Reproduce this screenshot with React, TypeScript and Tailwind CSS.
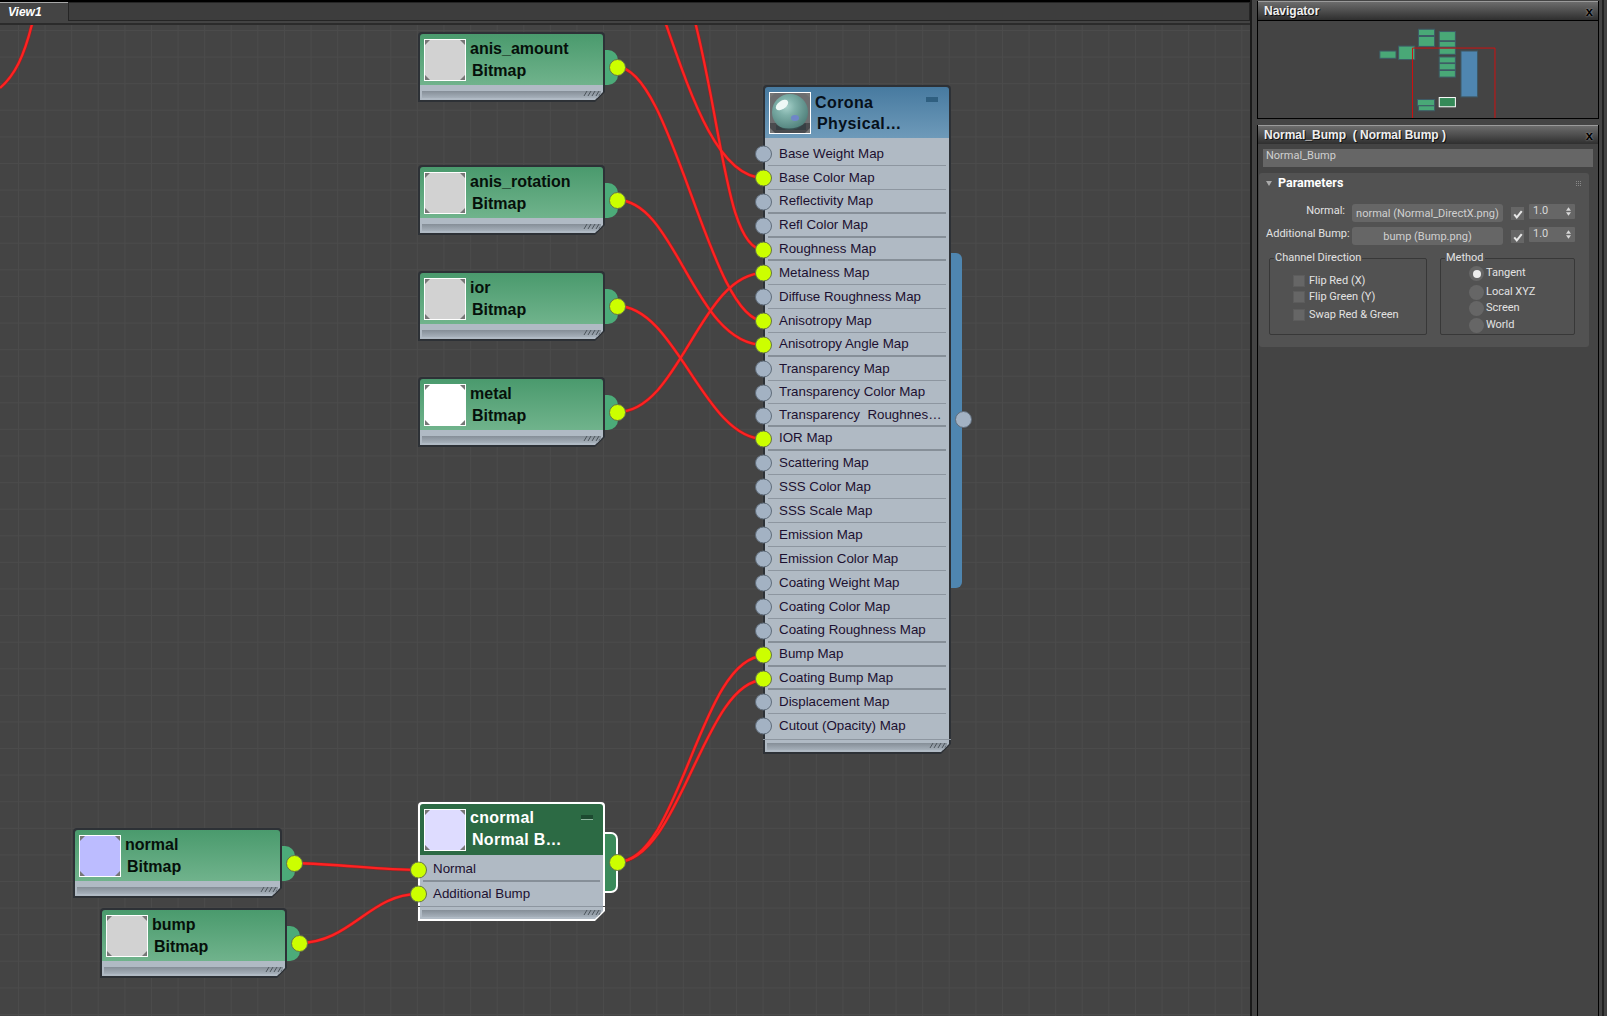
import type { ReactNode } from 'react';

const GREEN_HEAD = 'bg-[linear-gradient(#4a9a6d,#70b38c)]';

const coronaRows = [
  { label: 'Base Weight Map' },
  { label: 'Base Color Map', on: true },
  { label: 'Reflectivity Map', thick: true },
  { label: 'Refl Color Map', thick: true },
  { label: 'Roughness Map', on: true, thick: true, short: true },
  { label: 'Metalness Map', on: true },
  { label: 'Diffuse Roughness Map' },
  { label: 'Anisotropy Map', on: true },
  { label: 'Anisotropy Angle Map', on: true, thick: true },
  { label: 'Transparency Map' },
  { label: 'Transparency Color Map', short: true },
  { label: 'Transparency  Roughnes…', short: true, thick: true },
  { label: 'IOR Map', on: true, thick: true },
  { label: 'Scattering Map' },
  { label: 'SSS Color Map' },
  { label: 'SSS Scale Map' },
  { label: 'Emission Map' },
  { label: 'Emission Color Map' },
  { label: 'Coating Weight Map' },
  { label: 'Coating Color Map' },
  { label: 'Coating Roughness Map', thick: true },
  { label: 'Bump Map', on: true, thick: true },
  { label: 'Coating Bump Map', on: true, thick: true, short: true },
  { label: 'Displacement Map' },
  { label: 'Cutout (Opacity) Map', last: true },
];

const wires = [
  'M33 20C24 58 14 76 0 88',
  'M661 10C689 90 716 178 764 178',
  'M692 10C722 120 726 250 764 250',
  'M617 67C672 67 710 321 764 321',
  'M617 200C676 200 694 345 764 345',
  'M617 306C676 306 704 439 764 439',
  'M617 412C680 412 700 273 764 273',
  'M617 862C680 862 700 656 764 656',
  'M617 862C680 862 704 680 764 680',
  'M294 863C340 864 380 870 418 870',
  'M299 943C350 943 370 894 418 894',
];

function Socket({ on, className }: { on?: boolean; className: string }) {
  return (
    <span
      className={`absolute w-[17px] h-[17px] rounded-full border ${
        on ? 'bg-[#ccff00] border-[#66724a]' : 'bg-[#a3b2c3] border-[#5f6c7a]'
      } ${className}`}
    />
  );
}

function Thumb({ fill, children }: { fill?: string; children?: ReactNode }) {
  return (
    <div className={`relative w-[42px] h-[42px] shrink-0 border border-white overflow-hidden ${fill}`}>
      {children}
      <svg viewBox="0 0 40 40" className="absolute inset-0 w-full h-full">
        <polygon points="0,0 5,0 0,5" fill="#777" />
        <polygon points="40,0 35,0 40,5" fill="#777" />
        <polygon points="0,40 5,40 0,35" fill="#777" />
        <polygon points="40,40 35,40 40,35" fill="#777" />
      </svg>
    </div>
  );
}

function Sphere() {
  return (
    <svg viewBox="0 0 40 40" className="absolute inset-0 w-full h-full">
      <defs>
        <radialGradient id="ball" cx="0.4" cy="0.35" r="0.7">
          <stop offset="0" stopColor="#a9d2cc" />
          <stop offset="0.35" stopColor="#7fb0a9" />
          <stop offset="1" stopColor="#4d7d78" />
        </radialGradient>
      </defs>
      <rect width="40" height="40" fill="#6d6e70" />
      <rect y="30" width="40" height="10" fill="#4a4b4e" />
      <circle cx="20" cy="19" r="18" fill="url(#ball)" />
      <ellipse cx="12" cy="12" rx="7" ry="4" transform="rotate(-35 12 12)" fill="#eef8f6" />
      <ellipse cx="25" cy="25" rx="4" ry="3" fill="#6f86c8" />
      <path d="M6 32Q20 40 36 30L36 37 6 37Z" fill="#2f3c40" opacity="0.7" />
    </svg>
  );
}

function Hatch() {
  return (
    <svg viewBox="0 0 18 5" className="absolute right-[1px] bottom-[2px] w-[18px] h-[5px]">
      {[2, 6, 10, 14, 17].map((x) => (
        <line key={x} x1={x} y1="5" x2={x + 3} y2="0" stroke="#4d555c" strokeWidth="1" />
      ))}
    </svg>
  );
}

function NodeFooter({ selected, tall }: { selected?: boolean; tall?: boolean }) {
  return (
    <div
      className={`${selected ? 'bg-white' : 'bg-[#2d3136]'} px-[2px] pb-[2px] [clip-path:polygon(0_0,100%_0,100%_calc(100%-10px),calc(100%-10px)_100%,0_100%)]`}
    >
      <div
        className={`relative ${tall ? 'h-[15px] pt-[6px]' : 'h-[12px] pt-[3px]'} bg-[#b0bac4] px-[2px] [clip-path:polygon(0_0,100%_0,100%_calc(100%-8px),calc(100%-8px)_100%,0_100%)]`}
      >
        <div className="relative h-[7px] bg-[linear-gradient(#858e97,#a6b0ba)]">
          <Hatch />
        </div>
      </div>
    </div>
  );
}

function BitmapNode({
  name,
  fill,
  className,
}: {
  name: string;
  fill: string;
  className: string;
}) {
  return (
    <div className={`absolute ${className}`}>
      <div className="absolute left-full top-[18px] w-[13px] h-[35px] rounded-r-[10px] bg-[#4cab79]" />
      <Socket on className="-right-[21px] top-[27px]" />
      <div className="bg-[#2d3136] px-[2px] pt-[2px] rounded-t-[4px]">
        <div className={`h-[51px] flex gap-[4px] pl-[4px] pt-[5px] rounded-t-[3px] ${GREEN_HEAD}`}>
          <Thumb fill={fill} />
          <div className="text-[16px] font-bold text-[#06100a] leading-[22px] -mt-[1px]">
            <div>{name}</div>
            <div className="ml-[2px]">Bitmap</div>
          </div>
        </div>
      </div>
      <NodeFooter tall />
    </div>
  );
}

function Corona() {
  return (
    <div className="absolute left-[763px] top-[60px] w-[188px]">
      <div className="absolute left-full top-[168px] w-[11px] h-[335px] rounded-r-[6px] bg-[#4f86b0]" />
      <Socket className="-right-[21px] top-[326px]" />
      <div className="bg-[#2d3136] px-[2px] pt-[2px] rounded-t-[4px]">
        <div className="relative h-[51px] flex gap-[4px] pl-[4px] pt-[5px] rounded-t-[3px] bg-[linear-gradient(#477aa0,#6e9ab9)]">
          <Thumb>
            <Sphere />
          </Thumb>
          <div className="text-[16px] font-bold text-[#06101a] leading-[21px] tracking-[0.4px]">
            <div>Corona</div>
            <div className="ml-[2px]">Physical…</div>
          </div>
          <div className="absolute left-[161px] top-[10px] w-[12px] h-[5px] bg-[#2f5f80]" />
        </div>
      </div>
      <div className="relative bg-[#b0bac4] border-x-2 border-[#2d3136] pt-[4px] pb-[1px]">
        {coronaRows.map((r) => (
          <div key={r.label} className={`relative ${r.short ? 'h-[23px]' : 'h-[24px]'}`}>
            <Socket on={r.on} className="-left-[10px] top-1/2 -translate-y-1/2" />
            <div
              className={`h-full flex items-center ml-[3px] mr-[3px] pl-[11px] whitespace-pre text-[13.33px] text-[#1c1030] ${
                r.last ? '' : r.thick ? 'border-b-2 border-[#868f98]' : 'border-b border-[#8d96a0]'
              }`}
            >
              {r.label}
            </div>
          </div>
        ))}
      </div>
      <div className="h-px bg-[#8d96a0]" />
      <NodeFooter />
    </div>
  );
}

function NormalBumpNode() {
  return (
    <div className="absolute left-[418px] top-[777px] w-[187px]">
      <div className="absolute left-full top-[30px] w-[13px] h-[61px] rounded-r-[7px] bg-[#3a8a5a] border-2 border-l-0 border-white" />
      <Socket on className="-right-[21px] top-[52px]" />
      <div className="bg-white px-[2px] pt-[2px] rounded-t-[4px]">
        <div className="relative h-[51px] flex gap-[4px] pl-[4px] pt-[5px] rounded-t-[3px] bg-[#2c6a44]">
          <Thumb fill="bg-[#dedcff]" />
          <div className="text-[16px] font-bold text-white leading-[22px] -mt-[2px] tracking-[0.3px]">
            <div>cnormal</div>
            <div className="ml-[2px]">Normal B…</div>
          </div>
          <div className="absolute left-[161px] top-[11px] w-[12px] h-[5px] bg-[#1d4a30] border-b border-[#8fb59e]" />
        </div>
      </div>
      <div className="bg-[#b0bac4] border-x-2 border-white pt-[3px]">
        <div className="relative h-[24px]">
          <Socket on className="-left-[10px] top-1/2 -translate-y-1/2" />
          <div className="h-full flex items-center mx-[3px] pl-[10px] text-[13.33px] text-[#1c1030] border-b-2 border-[#868f98]">
            Normal
          </div>
        </div>
        <div className="relative h-[24px]">
          <Socket on className="-left-[10px] top-1/2 -translate-y-1/2" />
          <div className="h-full flex items-center mx-[3px] pl-[10px] text-[13.33px] text-[#1c1030]">
            Additional Bump
          </div>
        </div>
      </div>
      <div className="h-px bg-[#8d96a0] mx-[2px]" />
      <NodeFooter selected />
    </div>
  );
}

function TitleBar({ title }: { title: string }) {
  return (
    <div className="h-[19px] flex items-center justify-between pl-[6px] pr-[5px] bg-[linear-gradient(#6c6c6c,#2f2f2f)] border-t border-[#9a9a9a] font-['Liberation_Sans',sans-serif] text-[12px] font-bold whitespace-pre text-[#efefef] [text-shadow:1px_1px_0_#111]">
      <span>{title}</span>
      <span className="text-black text-[13px] leading-none [text-shadow:0_0_2px_#aaa]">x</span>
    </div>
  );
}

function Spinner() {
  return (
    <div className="w-[46px] h-[15px] bg-[#666] rounded-[1px] flex items-center justify-between pl-[4px] pr-[4px] text-[11px] text-[#d8d8d8]">
      <span>1.0</span>
      <svg viewBox="0 0 6 10" className="w-[5px] h-[9px]">
        <path d="M3 0L6 4H0ZM3 10L0 6H6Z" fill="#d8d8d8" />
      </svg>
    </div>
  );
}

function ParamRow({ label, value }: { label: string; value: string }) {
  return (
    <div className="flex items-start h-[18px]">
      <div className="w-[79px] -ml-[3px] text-right text-[11px] leading-[13px] whitespace-nowrap text-[#e2e2e2]">{label}</div>
      <div className="ml-[7px] w-[151px] h-[18px] rounded-[3px] bg-[#666] flex items-center justify-center text-[11px] pt-[2px] text-[#d0d0d0] whitespace-nowrap">
        {value}
      </div>
      <div className="ml-[8px] mt-[3px] w-[13px] h-[13px] bg-[#666] flex items-center justify-center">
        <svg viewBox="0 0 12 12" className="w-[10px] h-[10px]">
          <path d="M1.5 6.5L4.5 10L10.5 2.5" fill="none" stroke="#e8e8e8" strokeWidth="2.4" />
        </svg>
      </div>
      <div className="ml-[5px]">
        <Spinner />
      </div>
    </div>
  );
}

function CheckRow({ label, className = '' }: { label: string; className?: string }) {
  return (
    <div className={`h-[16px] flex items-center gap-[4px] ${className}`}>
      <span className="w-[12px] h-[12px] bg-[#666] border border-[#5c5c5c]" />
      <span>{label}</span>
    </div>
  );
}

function RadioRow({ label, on, className = '' }: { label: string; on?: boolean; className?: string }) {
  return (
    <div className={`flex items-center gap-[2px] ${className}`}>
      <span className="w-[15px] h-[15px] rounded-full bg-[#666] flex items-center justify-center">
        {on && <span className="w-[8px] h-[8px] rounded-full bg-[#eee]" />}
      </span>
      <span>{label}</span>
    </div>
  );
}

export default function App() {
  return (
    <div className="w-[1607px] h-[1016px] flex bg-[#444] font-['Liberation_Sans',sans-serif] overflow-hidden">
      {/* Node view */}
      <div className="w-[1252px] h-full flex flex-col border-r-2 border-[#1b1b1b]">
        <div className="h-[25px] shrink-0 flex bg-[#444] border-t-2 border-black border-b-2 border-b-[#2b2b2b]">
          <div className="w-[68px] h-[21px] pl-[8px] border-t border-[#a8a8a8] text-[12px] font-bold italic text-white leading-[19px]">
            View1
          </div>
          <div className="flex-1 h-[19px] bg-[#3d3d3d] border border-[#252525]" />
        </div>
        <div className="relative flex-1 overflow-hidden bg-[#444] bg-[linear-gradient(#4b4b4b_1px,transparent_1px),linear-gradient(90deg,#4b4b4b_1px,transparent_1px)] bg-[size:26.6px_26.6px] bg-[position:18px_5px]">
          <svg viewBox="0 25 1250 991" className="absolute left-0 top-0 w-[1250px] h-[991px]" fill="none">
            {wires.map((d) => (
              <path key={d} d={d} stroke="#8c2626" strokeWidth="3.6" />
            ))}
            {wires.map((d) => (
              <path key={d} d={d} stroke="#ff2222" strokeWidth="2.3" />
            ))}
          </svg>
          <BitmapNode name="anis_amount" fill="bg-[#d2d2d2]" className="left-[418px] top-[7px] w-[187px]" />
          <BitmapNode name="anis_rotation" fill="bg-[#d2d2d2]" className="left-[418px] top-[140px] w-[187px]" />
          <BitmapNode name="ior" fill="bg-[#d2d2d2]" className="left-[418px] top-[246px] w-[187px]" />
          <BitmapNode name="metal" fill="bg-white" className="left-[418px] top-[352px] w-[187px]" />
          <BitmapNode name="normal" fill="bg-[#bcbcff]" className="left-[73px] top-[803px] w-[209px]" />
          <BitmapNode name="bump" fill="bg-[#d2d2d2]" className="left-[100px] top-[883px] w-[187px]" />
          <Corona />
          <NormalBumpNode />
        </div>
      </div>

      {/* Side panels */}
      <div className="ml-[5px] w-[342px] h-full flex flex-col gap-[6px] pt-[1px]">
        <div className="h-[118px] shrink-0 border border-black border-t-0 flex flex-col">
          <TitleBar title="Navigator" />
          <svg viewBox="54 60 1020 294" className="w-[340px] h-[98px] border-t border-black">
            <g fill="#49a877" stroke="#3e5a66" strokeWidth="3">
              <rect x="418" y="151" width="49" height="22" />
              <rect x="475" y="136" width="49" height="41" />
              <rect x="535" y="85" width="49" height="19" />
              <rect x="535" y="107" width="49" height="30" />
              <rect x="598" y="92" width="49" height="28" />
              <rect x="598" y="122" width="49" height="17" />
              <rect x="598" y="142" width="49" height="19" />
              <rect x="598" y="169" width="49" height="18" />
              <rect x="598" y="189" width="49" height="19" />
              <rect x="598" y="210" width="49" height="20" />
              <rect x="532" y="298" width="52" height="19" />
              <rect x="535" y="317" width="49" height="15" />
            </g>
            <rect x="664" y="151" width="50" height="139" fill="#4f86b0" stroke="#3e5a66" strokeWidth="3" />
            <rect x="598" y="292" width="49" height="28" fill="#358a58" stroke="#fff" strokeWidth="3" />
            <path d="M517 354V142H767V354" fill="none" stroke="#d01010" strokeWidth="3" />
          </svg>
        </div>
        <div className="flex-1 border-l border-r border-black flex flex-col text-[#e2e2e2] font-['Roboto',sans-serif]">
          <TitleBar title="Normal_Bump  ( Normal Bump )" />
          <div className="mx-[5px] mt-[5px] h-[18px] bg-[#666] px-[3px] text-[11px] leading-[14px] text-[#d0d0d0]">
            Normal_Bump
          </div>
          <div className="mx-[1px] mt-[6px] w-[330px] bg-[#525252] rounded-[3px] pb-[12px] text-[11px]">
            <div className="h-[20px] flex items-center justify-between pl-[7px] pr-[8px]">
              <div className="flex items-center gap-[6px]">
                <svg viewBox="0 0 6 5" className="w-[6px] h-[5px]">
                  <path d="M0 0H6L3 5Z" fill="#aaa" />
                </svg>
                <span className="font-bold text-[12.5px] text-white">Parameters</span>
              </div>
              <svg viewBox="0 0 5 5" className="w-[5px] h-[5px]">
                <g fill="#888">
                  <rect width="1" height="1" />
                  <rect x="2" width="1" height="1" />
                  <rect x="4" width="1" height="1" />
                  <rect y="2" width="1" height="1" />
                  <rect x="2" y="2" width="1" height="1" />
                  <rect x="4" y="2" width="1" height="1" />
                  <rect y="4" width="1" height="1" />
                  <rect x="2" y="4" width="1" height="1" />
                  <rect x="4" y="4" width="1" height="1" />
                </g>
              </svg>
            </div>
            <div className="mt-[11px] flex flex-col gap-[5px] pl-[10px]">
              <ParamRow label="Normal:" value="normal (Normal_DirectX.png)" />
              <ParamRow label="Additional Bump:" value="bump (Bump.png)" />
            </div>
            <div className="mt-[6px] ml-[10px] flex gap-[13px]">
              <fieldset className="w-[158px] h-[84px] border border-[#383838] rounded-[2px]">
                <legend className="ml-[4px] px-[1px] leading-[14px]">Channel Direction</legend>
                <div className="pt-[8px] pl-[23px]">
                  <CheckRow label="Flip Red (X)" />
                  <CheckRow label="Flip Green (Y)" />
                  <CheckRow label="Swap Red &amp; Green" className="mt-[2px]" />
                </div>
              </fieldset>
              <fieldset className="w-[135px] h-[84px] border border-[#383838] rounded-[2px]">
                <legend className="ml-[4px] px-[1px] leading-[14px]">Method</legend>
                <div className="pl-[28px]">
                  <RadioRow label="Tangent" on className="h-[17px]" />
                  <RadioRow label="Local XYZ" className="h-[16px] mt-[2px]" />
                  <RadioRow label="Screen" className="h-[16px]" />
                  <RadioRow label="World" className="h-[16px] mt-[1px]" />
                </div>
              </fieldset>
            </div>
          </div>
        </div>
      </div>
      <div className="ml-[3px] w-[2px] h-full bg-[#222]" />
    </div>
  );
}
